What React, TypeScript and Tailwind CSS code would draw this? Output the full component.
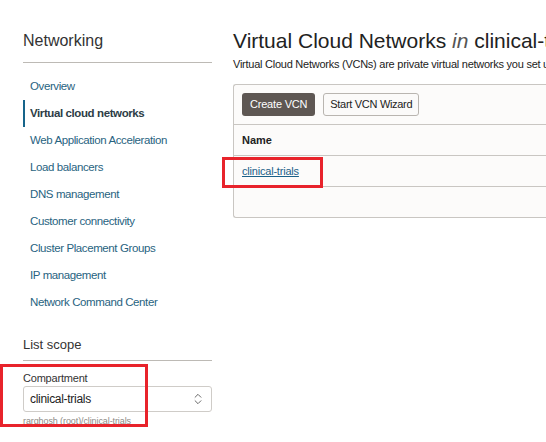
import { ChevronsUpDown } from 'lucide-react';

const navItems = [
  'Overview',
  'Virtual cloud networks',
  'Web Application Acceleration',
  'Load balancers',
  'DNS management',
  'Customer connectivity',
  'Cluster Placement Groups',
  'IP management',
  'Network Command Center',
];

function Sidebar() {
  return (
    <aside className="w-[212px] shrink-0 pl-[23px] pt-[31px]">
      <h2 className="text-[16px] leading-[20px] text-[#333]">Networking</h2>
      <div className="mt-[11px] border-t border-[#bdbab5]" />
      <nav className="mt-[10px] flex flex-col">
        {navItems.map((item, i) => {
          const active = i === 1;
          return (
            <a
              key={item}
              className={`block h-[27px] border-l-2 pl-[5px] text-[11.5px] leading-[27px] tracking-[-0.4px] ${
                active ? 'border-[#16648a] font-bold text-[#2d3d46]' : 'border-transparent text-[#28637f]'
              }`}
            >
              {item}
            </a>
          );
        })}
      </nav>
      <h3 className="mt-[20px] text-[13px] leading-[18px] text-[#333]">List scope</h3>
      <div className="mt-[6px] border-t border-[#bdbab5]" />
      <div className="relative mt-[10px]">
        <label className="block text-[11px] leading-[14px] tracking-[-0.2px] text-[#333]">Compartment</label>
        <div className="mt-[1px] flex h-[26px] items-center justify-between rounded-[3px] border border-[#cfccc8] bg-white pl-[6px] pr-[6px]">
          <span className="text-[12px] tracking-[-0.3px] text-[#222]">clinical-trials</span>
          <ChevronsUpDown className="h-[14px] w-[14px] text-[#555]" strokeWidth={1.5} />
        </div>
        <p className="mt-[3px] text-[9px] leading-[12px] tracking-[-0.1px] text-[#8d8a86]">rarghosh (root)/clinical-trials</p>
        <div className="pointer-events-none absolute left-[-23px] top-[-7px] h-[63px] w-[148px] border-[3px] border-[#e8232b]" />
      </div>
    </aside>
  );
}

function Main() {
  return (
    <main className="ml-[21px] min-w-0 flex-1 pt-[28px]">
      <h1 className="whitespace-nowrap text-[21px] leading-[26px] text-[#222]">
        Virtual Cloud Networks <i className="text-[#555]">in</i> clinical-trials
      </h1>
      <p className="mt-[3px] whitespace-nowrap text-[11px] leading-[14px] tracking-[-0.25px] text-[#222]">
        Virtual Cloud Networks (VCNs) are private virtual networks you set up in Oracle data centers.
      </p>
      <div className="mt-[13px] w-[340px] rounded-l-[3px] border border-r-0 border-[#c9c6c2] bg-[#fcfbfa]">
        <div className="flex gap-[8px] px-[8px] py-[8px]">
          <button className="h-[23px] rounded-[3px] bg-[#5e5753] px-[8px] text-[11px] tracking-[-0.2px] text-white">Create VCN</button>
          <button className="h-[23px] rounded-[3px] border border-[#b9b5b0] bg-[#fbfaf9] px-[6px] text-[11px] tracking-[-0.3px] text-[#222]">
            Start VCN Wizard
          </button>
        </div>
        <div className="border-t border-[#c9c6c2]" />
        <div className="h-[30px] px-[8px] text-[11px] font-bold leading-[30px] text-[#222]">Name</div>
        <div className="border-t border-[#c9c6c2]" />
        <div className="relative h-[30px] px-[8px] text-[11px] leading-[30px] tracking-[-0.2px]">
          <a className="text-[#1a6088] underline">clinical-trials</a>
          <div className="pointer-events-none absolute left-[-12px] top-[1px] h-[31px] w-[101px] border-[3px] border-[#e8232b]" />
        </div>
        <div className="border-t border-[#c9c6c2]" />
        <div className="h-[30px]" />
      </div>
    </main>
  );
}

export default function App() {
  return (
    <div className="flex h-[442px] w-[546px] overflow-hidden bg-white" style={{ fontFamily: '"Liberation Sans", Arial, sans-serif' }}>
      <Sidebar />
      <Main />
    </div>
  );
}
